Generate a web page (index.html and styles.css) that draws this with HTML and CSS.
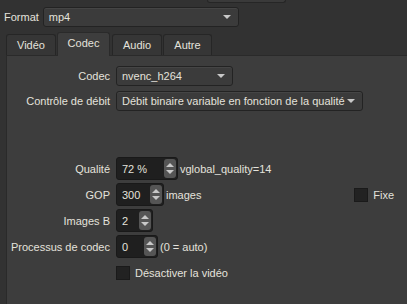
FILE: index.html
```html
<!DOCTYPE html>
<html lang="fr">
<head>
    <meta charset="UTF-8">
    <title>Codec</title>
    <link rel="stylesheet" href="styles.css">
</head>
<body>

    <div class="topbar">
        <div class="topbox"></div>
    </div>

    <div class="format-row">
        <span class="label">Format</span>
        <div class="combo combo-format"><span>mp4</span><i class="arrow"></i></div>
    </div>

    <div class="tabs">
        <div class="tab">Vidéo</div>
        <div class="tab active">Codec</div>
        <div class="tab">Audio</div>
        <div class="tab">Autre</div>
    </div>

    <div class="panel">
        <div class="form">
            <span class="label">Codec</span>
            <div class="field">
                <div class="combo combo-codec"><span>nvenc_h264</span><i class="arrow"></i></div>
            </div>

            <span class="label">Contrôle de débit</span>
            <div class="field">
                <div class="combo combo-rate"><span>Débit binaire variable en fonction de la qualité</span><i class="arrow"></i></div>
            </div>
        </div>

        <div class="form form-spins">
            <span class="label">Qualité</span>
            <div class="field">
                <div class="spin spin-quality"><span>72 %</span><div class="spin-btn"><i class="up"></i><i class="down"></i></div></div>
                <span class="after">vglobal_quality=14</span>
            </div>

            <span class="label">GOP</span>
            <div class="field">
                <div class="spin spin-gop"><span>300</span><div class="spin-btn"><i class="up"></i><i class="down"></i></div></div>
                <span class="after">images</span>
                <label class="check check-fixe"><i class="box"></i>Fixe</label>
            </div>

            <span class="label">Images B</span>
            <div class="field">
                <div class="spin spin-b"><span>2</span><div class="spin-btn"><i class="up"></i><i class="down"></i></div></div>
            </div>

            <span class="label">Processus de codec</span>
            <div class="field">
                <div class="spin spin-threads"><span>0</span><div class="spin-btn"><i class="up"></i><i class="down"></i></div></div>
                <span class="after">(0 = auto)</span>
            </div>

            <span></span>
            <div class="field">
                <label class="check"><i class="box"></i>Désactiver la vidéo</label>
            </div>
        </div>
    </div>

</body>
</html>
```

FILE: styles.css
```css
body {
    margin: 0;
    height: 304px;
    overflow: hidden;
    background: #323232;
    color: #e4e2dc;
    font-family: 'Liberation Sans', Arial, sans-serif;
    font-size: 11px;
}

/* bord du widget au-dessus */
.topbar {
    height: 7px;
}

.topbox {
    margin-left: 207px;
    width: 77px;
    height: 2px;
    background: #3a3a3a;
    border: 1px solid #262626;
    border-top: none;
    border-radius: 0 0 3px 3px;
}

.format-row {
    display: flex;
    align-items: center;
    gap: 4px;
    padding-left: 4px;
}

/* liste déroulante */
.combo {
    display: flex;
    align-items: center;
    justify-content: space-between;
    box-sizing: border-box;
    height: 20px;
    padding: 0 7px 0 5px;
    white-space: nowrap;
    background: #3b3b3b;
    border: 1px solid #232323;
    border-radius: 3px;
    box-shadow: inset 0 1px 0 #454545;
}

.combo-format {
    width: 196px;
}

.combo-codec {
    width: 117px;
}

.combo-rate {
    width: 247px;
}

.arrow {
    width: 0;
    height: 0;
    border-left: 4px solid transparent;
    border-right: 4px solid transparent;
    border-top: 4px solid #c8c8c8;
}

/* onglets */
.tabs {
    display: flex;
    align-items: flex-end;
    gap: 1px;
    margin: 5px 0 0 6px;
    height: 23px;
}

.tab {
    box-sizing: border-box;
    height: 21px;
    padding: 4px 0 0;
    text-align: center;
    background: #363636;
    border: 1px solid #262626;
    border-bottom: none;
    border-radius: 3px 3px 0 0;
}

.tab:nth-child(1) { width: 50px; }
.tab:nth-child(3) { width: 50px; margin-left: 1px; }
.tab:nth-child(4) { width: 49px; }

.tab.active {
    width: 53px;
    height: 24px;
    background: #3d3d3d;
    border-color: #2a2a2a;
    margin-bottom: -1px;
    position: relative;
    z-index: 1;
}

.panel {
    box-sizing: border-box;
    height: 249px;
    margin-left: 6px;
    padding: 10px 13px 0 0;
    background: #3d3d3d;
    border-top: 1px solid #2a2a2a;
    border-left: 1px solid #2a2a2a;
}

/* grille étiquette / champ */
.form {
    display: grid;
    grid-template-columns: 103px 1fr;
    column-gap: 6px;
    row-gap: 5px;
    align-items: center;
}

.form-spins {
    margin-top: 46px;
    row-gap: 3px;
}

.form .label {
    text-align: right;
    white-space: nowrap;
}

.field {
    display: flex;
    align-items: center;
    height: 20px;
}

.form-spins .field {
    height: 23px;
}

/* zone numérique */
.spin {
    display: flex;
    align-items: center;
    justify-content: space-between;
    box-sizing: border-box;
    height: 23px;
    padding: 0 1px 0 5px;
    background: #1f1f1f;
    border: 1px solid #191919;
    border-radius: 3px;
}

.spin-quality { width: 62px; }
.spin-gop { width: 48px; }
.spin-b { width: 37px; }
.spin-threads { width: 42px; }

.spin-btn {
    display: flex;
    flex-direction: column;
    align-items: center;
    justify-content: center;
    gap: 3px;
    width: 12px;
    height: 19px;
    background: #555555;
    border-radius: 3px;
}

.spin-btn .up,
.spin-btn .down {
    width: 0;
    height: 0;
    border-left: 4px solid transparent;
    border-right: 4px solid transparent;
}

.spin-btn .up {
    border-bottom: 4px solid #c8c8c8;
}

.spin-btn .down {
    border-top: 4px solid #c8c8c8;
}

.after {
    margin-left: 2px;
    white-space: nowrap;
}

/* cases à cocher */
.check {
    display: flex;
    align-items: center;
    gap: 5px;
}

.check-fixe {
    margin-left: auto;
}

.box {
    box-sizing: border-box;
    width: 14px;
    height: 14px;
    background: #222222;
    border: 1px solid #1a1a1a;
}
```
